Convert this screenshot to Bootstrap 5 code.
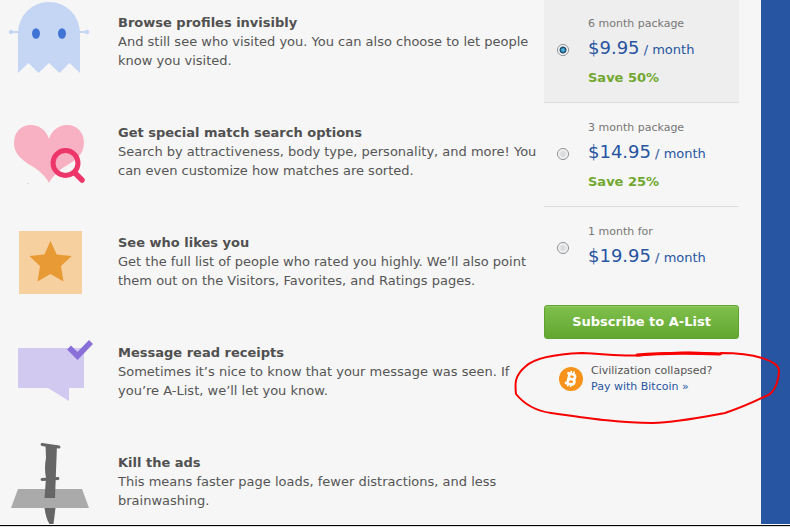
<!DOCTYPE html>
<html lang="en">
<head>
<meta charset="utf-8">
<meta name="viewport" content="width=device-width, initial-scale=1">
<title>A-List</title>
<link href="https://cdn.jsdelivr.net/npm/bootstrap@5.3.0/dist/css/bootstrap.min.css" rel="stylesheet">
<style>
body{font-family:Verdana,"DejaVu Sans",sans-serif;font-size:13px;line-height:19px;color:#555;background:#2755a1}
.page-shell{min-height:100vh}
.sheet{background:#f6f6f6}
.side-strip{flex:0 0 29px;background:#2755a1}
.bottom-rule{height:3px;background:#ddd;border-top:1px solid #fff;box-shadow:inset 0 1px #000}
.features{padding-top:13px}
.feature{height:110px}
.feature h2{font-size:13px;line-height:19px;font-weight:700;margin:0;color:#505050}
.feature svg{flex:0 0 118px;width:118px;height:57px;overflow:visible}
.feature:last-child{height:70px}
.offers{flex:0 0 195px;margin:-1px 22px 0 0}
.offer{padding:17px 0 14px 13px;border-bottom:1px solid #ddd;gap:19px;cursor:pointer}
.offer.chosen{background:#eee}
.offer.final{border:0;padding-bottom:3px}
.offer input{appearance:none;flex:0 0 12px;height:12px;margin:0 0 5px;border:1px solid #8b8d90;border-radius:50%;background:radial-gradient(circle,#d3d6da 0,#e2e3e5 3px,#fff 5px)}
.offer input:checked{background:radial-gradient(circle,#4bb8e6 0 1px,#173f5c 3px,#fff 4px)}
.term{font-size:11px;line-height:16px;color:#777}
.price{line-height:36px;color:#2755a1}
.price b{font-size:18px;line-height:18px;font-weight:400}
.saving{font-weight:700;line-height:20px;color:#72a830}
.subscribe{height:34px;margin-top:26px;padding:0;border:1px solid #5fa332;border-radius:3px;background:linear-gradient(#80c04c,#62a730);box-shadow:inset 0 1px #92cb65;color:#fff;font-size:13px;font-weight:700}
.bitcoin{margin-top:24px;padding-left:15px;gap:8px;font-size:11px;line-height:16px}
.bitcoin a{color:#2755a1}
.scribble{left:-34px;top:-18px;overflow:visible;pointer-events:none}
</style>
<script src="https://cdn.jsdelivr.net/npm/bootstrap@5.3.0/dist/js/bootstrap.bundle.min.js"></script>
</head>
<body>
<div class="page-shell d-flex flex-column overflow-hidden">
<div class="d-flex flex-grow-1">
<main class="sheet d-flex flex-grow-1">
<ul class="features list-unstyled flex-grow-1 mb-0">
<li class="feature d-flex">
<svg viewBox="0 13 118 57" aria-hidden="true"><g fill="#c5d6f5"><path d="M18 33a31 31 0 0 1 62 0v40L69.500 63 59.500 73 49 63 38.500 73 28.500 63 18 73z"/><circle cx="11" cy="32" r="2.200"/><circle cx="87" cy="32" r="2.200"/><path d="M11 31h76v2H11z"/></g><g fill="#3f74d4"><ellipse cx="36" cy="33.500" rx="4" ry="5.200"/><ellipse cx="62" cy="33.500" rx="4" ry="5.200"/></g></svg>
<div><h2>Browse profiles invisibly</h2>And still see who visited you. You can also choose to let people know you visited.</div>
</li>
<li class="feature d-flex">
<svg viewBox="0 123 118 57" aria-hidden="true"><path fill="#f8b1c3" d="M49 139C46 130 39 125 31 125 21 125 14 132 14 143 14 154 22 160 31 165.500 40 171 46 177 49 183 52 177 58 171 67 165.500 76 160 84 154 84 143 84 132 77 125 67 125 59 125 52 130 49 139z"/><path fill="#f6f6f6" d="M75 160.500V166l-4 7h-9l-4-1q4-4 9-6.500z"/><circle cx="65.500" cy="163" r="12.500" fill="none" stroke="#ed376a" stroke-width="5"/><path d="M75 173l7 7" stroke="#ed376a" stroke-width="5.500" stroke-linecap="round"/><path fill="#ddd" d="M27 183h2v1h-2z"/></svg>
<div><h2>Get special match search options</h2>Search by attractiveness, body type, personality, and more! You can even customize how matches are sorted.</div>
</li>
<li class="feature d-flex">
<svg viewBox="0 233 118 57" aria-hidden="true"><path fill="#f7d0a0" d="M19 231h63v63H19z"/><path fill="#e89a35" d="M50.500 241l6.200 13.500 15 1.500-10.700 10 2.500 15.500-13-7.500-13 7.500L40 266l-10.700-10 15-1.500z"/></svg>
<div><h2>See who likes you</h2>Get the full list of people who rated you highly. We’ll also point them out on the Visitors, Favorites, and Ratings pages.</div>
</li>
<li class="feature d-flex">
<svg viewBox="0 343 118 57" aria-hidden="true"><path fill="#d2c9f1" d="M18 348h66v40H69v13l-21-13H18z"/><path fill="none" stroke="#8870d8" stroke-width="5.500" d="M69 347.500l8.500 8.500L91 342"/></svg>
<div><h2>Message read receipts</h2>Sometimes it’s nice to know that your message was seen. If you’re A-List, we’ll let you know.</div>
</li>
<li class="feature d-flex">
<svg viewBox="0 453 118 57" aria-hidden="true"><path fill="#aaa" d="M18 489h64l7 19H11z"/><path fill="#666" d="M45.500 445H57l-2 53H44.500l1.500-20q-2-10 0-20zM44.500 508H55.500l-2 16H49.500q-3.500-5-5-16z"/><path stroke="#666" stroke-width="2.800" stroke-linecap="round" d="M42 444.500l17 2.500M42 479.500l16-1"/></svg>
<div><h2>Kill the ads</h2>This means faster page loads, fewer distractions, and less brainwashing.</div>
</li>
</ul>
<form class="offers">
<label class="offer chosen d-flex align-items-center"><input type="radio" name="plan" checked><span><span class="term d-block">6 month package</span><span class="price d-block"><b>$9.95</b> / month</span><span class="saving d-block">Save 50%</span></span></label>
<label class="offer d-flex align-items-center"><input type="radio" name="plan"><span><span class="term d-block">3 month package</span><span class="price d-block"><b>$14.95</b> / month</span><span class="saving d-block">Save 25%</span></span></label>
<label class="offer final d-flex align-items-center"><input type="radio" name="plan"><span><span class="term d-block">1 month for</span><span class="price d-block"><b>$19.95</b> / month</span></span></label>
<button class="subscribe btn d-block w-100" type="button">Subscribe to A-List</button>
<div class="bitcoin d-flex align-items-center position-relative">
<svg width="24" height="24" viewBox="0 0 24 24" aria-hidden="true"><circle cx="12" cy="12" r="12" fill="#f7931a"/><g transform="rotate(14 12 12)" fill="none" stroke="#fff"><path stroke-width="2.600" d="M9.500 7v10M7 7h6a2.400 2.400 0 0 1 0 5H9.500h4a2.500 2.500 0 0 1 0 5H7"/><path stroke-width="1.700" d="M10.500 4v3M13.300 4v3M10.500 17v3M13.300 17v3"/></g></svg>
<div class="text-nowrap">Civilization collapsed?<br><a class="text-decoration-none" href="#">Pay with Bitcoin »</a></div>
<svg class="scribble position-absolute" width="270" height="80" viewBox="510 345 270 80" fill="none" stroke="#f80000" stroke-width="2" stroke-linecap="round" stroke-linejoin="round" aria-hidden="true"><path d="M721 354C690 351 666 353 644 355C625 357 608 354 582 353C558 354 536 357 526 366C514 376 515 384 516 394C524 404 537 411 551 413C587 418 620 423 652 423C680 422 703 417 725 413C743 407 758 400 770 394C776 389 779 378 779 371C779 364 770 361 762 358C749 354 733 353 721 353"/><path stroke-width="3" d="M637 355Q670 352 720 354"/></svg>
</div>
</form>
</main>
<div class="side-strip"></div>
</div>
<div class="bottom-rule"></div>
</div>
</body>
</html>
